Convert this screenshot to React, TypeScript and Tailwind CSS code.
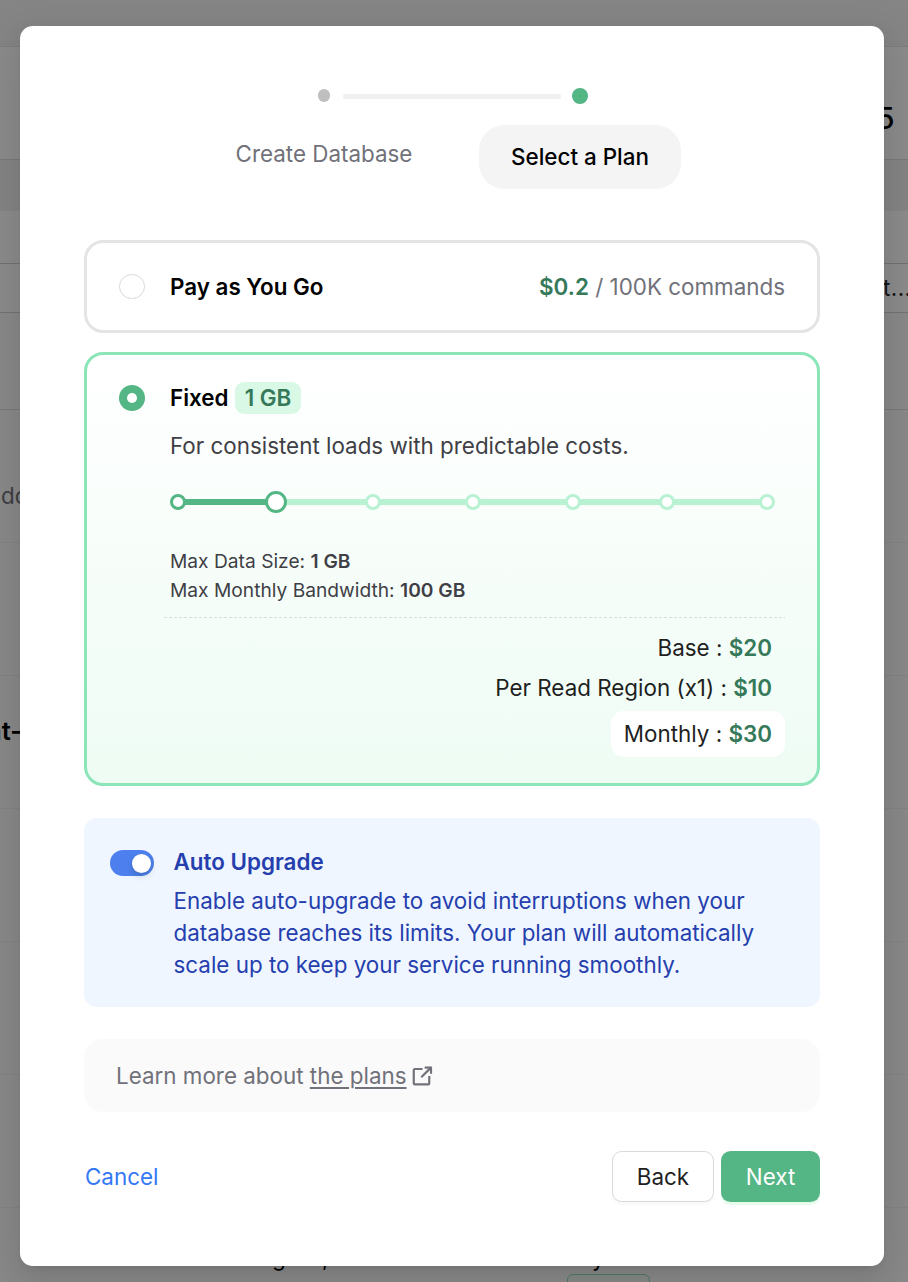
import React from "react";

const rows = [
  "h-[46px] bg-[#f3f3f3]",
  "h-[113px] border-t border-[#e3e3e3] bg-[#fefefe]",
  "h-[52px] border-t border-[#dedede] bg-[#f1f1f1]",
  "h-[52px] bg-[#fefefe]",
  "h-[49px] border-t border-[#cfcfcf] bg-[#fefefe]",
  "h-[97px] border-t border-[#cfcfcf] bg-[#fafafa]",
  "h-[133px] border-t border-[#dddddd] bg-[#fafafa]",
  "h-[133px] border-t border-[#efefef] bg-[#fafafa]",
  "h-[133px] border-t border-[#efefef] bg-[#fafafa]",
  "h-[133px] border-t border-[#efefef] bg-[#fafafa]",
  "h-[133px] border-t border-[#efefef] bg-[#fafafa]",
  "h-[133px] border-t border-[#efefef] bg-[#fafafa]",
  "h-[133px] border-t border-[#efefef] bg-[#fafafa]",
];

function Backdrop() {
  return (
    <div aria-hidden="true">
      {rows.map((c, i) => (
        <div key={i} className={c} />
      ))}
      <span className="absolute left-[876px] top-[98px] text-[30px] font-medium leading-[40px] text-black">5</span>
      <span className="absolute left-[883px] top-[272px] text-[22.4px] leading-8 tracking-[0.02em] text-[#27272a]">t...</span>
      <span className="absolute left-px top-[480px] text-[22.4px] leading-8 text-[#71717a]">do</span>
      <span className="absolute left-[-14px] top-[715px] text-[25.6px] font-semibold leading-8 text-black">nt-</span>
      <span className="absolute left-[272px] top-[1242px] text-[22.4px] leading-8 text-black">g</span>
      <span className="absolute left-[322px] top-[1242px] text-[22.4px] leading-8 text-black">,</span>
      <span className="absolute left-[592px] top-[1242px] text-[22.4px] leading-8 text-black">y</span>
      <span className="absolute left-[567px] top-[1274px] h-8 w-[83px] rounded-[6px] border border-[#8fdcb6] bg-[#f0f9f4]" />
    </div>
  );
}

function Steps() {
  return (
    <div>
      <div className="flex h-4 items-center pl-[234px]">
        <span className="mb-px h-[13px] w-3 rounded-full bg-[#bfbfbf]" />
        <span className="ml-[13px] h-[5px] w-[218px] rounded-[2px] bg-[#f0f0f0]" />
        <span className="ml-[11px] size-4 rounded-full bg-[#54b585]" />
      </div>
      <div className="mt-[21px] flex h-16 pl-28 text-center">
        <div className="w-64 pt-[13px] text-[#71717a]">Create Database</div>
        <div className="ml-[27px] flex w-[202px] items-center justify-center rounded-[25.6px] bg-[#f4f4f4] font-medium text-black">
          Select a Plan
        </div>
      </div>
    </div>
  );
}

type Stop = { width: string; on: boolean; current?: boolean };
const stops: Stop[] = [
  { width: "w-0", on: true },
  { width: "w-[81px] -mx-px", on: true, current: true },
  { width: "w-[80px] -mx-px", on: false },
  { width: "w-[86px] -mx-px", on: false },
  { width: "w-[86px] -mx-px", on: false },
  { width: "w-[80px] -mx-px", on: false },
  { width: "w-[86px] -mx-px", on: false },
];

function SizeSlider() {
  return (
    <div className="mt-[29px] flex h-[22px] items-center" role="slider" aria-valuenow={1} aria-label="Plan size">
      {stops.map((s, i) => (
        <React.Fragment key={i}>
          <span className={`h-1.5 shrink-0 ${s.width} ${s.on ? "bg-[#54b585]" : "bg-[#b9f2d3]"}`} />
          <span
            className={`relative shrink-0 rounded-full border-[3px] bg-white ${s.current ? "size-[22px]" : "size-4"} ${
              s.on ? "border-[#54b585]" : "border-[#b9f2d3]"
            }`}
          />
        </React.Fragment>
      ))}
    </div>
  );
}

export default function App() {
  return (
    <div className="relative h-[1282px] w-[908px] overflow-hidden font-['Inter',sans-serif] text-[22.4px] leading-8 [font-optical-sizing:none]">
      <Backdrop />
      <div className="absolute inset-0 bg-black/45 pl-5 pt-[26px]">
        <div className="h-[1240px] w-[864px] rounded-[12.8px] bg-white px-16 pt-[62px] shadow-[0_10px_26px_0_rgba(0,0,0,0.08),0_5px_10px_-6px_rgba(0,0,0,0.12),0_14px_45px_13px_rgba(0,0,0,0.05)]">
          <Steps />

          <div className="mt-[51px] flex h-[93px] items-center rounded-[19.2px] border-[3px] border-[#e4e4e6] px-8">
            <span className="h-[25px] w-[26px] rounded-full border border-[#d9d9d9]" />
            <span className="ml-[25px] grow font-semibold text-black">Pay as You Go</span>
            <span className="text-[#71717a]">
              <b className="font-semibold text-[#35795a]">$0.2</b> / 100K commands
            </span>
          </div>

          <div className="mt-[19px] flex h-[434px] rounded-[19.2px] border-[3px] border-[#8ce5b9] bg-linear-to-b from-white to-[#eefcf4] pl-8 pr-8 pt-[27px]">
            <span className="mt-[3px] flex size-[26px] shrink-0 items-center justify-center rounded-full bg-[#54b585]">
              <span className="size-2.5 rounded-full bg-white" />
            </span>
            <div className="ml-[25px] grow">
              <div className="flex">
                <span className="w-[59px] font-semibold text-black">Fixed</span>
                <span className="ml-[6px] flex h-8 w-[66px] items-center justify-center rounded-[9px] bg-[#d9f8e6] font-semibold text-[#35795a]">
                  1 GB
                </span>
              </div>
              <div className="mt-4 text-[#3f3f46]">For consistent loads with predictable costs.</div>
              <SizeSlider />
              <div className="mt-[34px] text-[19.2px] leading-[29px] text-[#3f3f46]">
                <div>
                  Max Data Size: <b className="font-semibold">1 GB</b>
                </div>
                <div>
                  Max Monthly Bandwidth: <b className="font-semibold">100 GB</b>
                </div>
              </div>
              <svg className="-ml-1.5 mt-3 block" width="621" height="1" aria-hidden="true">
                <line x1="0" y1="0.5" x2="621" y2="0.5" stroke="#d5e0da" strokeDasharray="3 2" />
              </svg>
              <div className="mt-[14px] flex flex-col items-end text-[#1f1f1f]">
                <div className="pr-[13px]">
                  Base : <b className="font-semibold text-[#35795a]">$20</b>
                </div>
                <div className="mt-2 pr-[13px]">
                  Per Read Region (x1) : <b className="font-semibold text-[#35795a]">$10</b>
                </div>
                <div className="mt-[7px] flex h-[46px] w-[174px] items-center justify-end whitespace-pre rounded-[12.8px] bg-white pr-[13px]">
                  Monthly : <b className="font-semibold text-[#35795a]">$30</b>
                </div>
              </div>
            </div>
          </div>

          <div className="mt-8 flex h-[189px] rounded-[12.8px] bg-[#eff6ff] pl-[26px] pt-7 text-[#263fae]">
            <span className="mt-1 flex h-[26px] w-11 shrink-0 items-center justify-end rounded-full bg-[#4d80ee] pr-[3px]">
              <span className="size-[19px] rounded-full bg-white shadow-[0_3px_6px_0_rgba(0,35,11,0.2)]" />
            </span>
            <div className="ml-[19.5px]">
              <div className="font-semibold">Auto Upgrade</div>
              <div className="mt-[7px]">
                Enable auto-upgrade to avoid interruptions when your
                <br />
                database reaches its limits. Your plan will automatically
                <br />
                scale up to keep your service running smoothly.
              </div>
            </div>
          </div>

          <div className="mt-8 flex h-[73px] items-center rounded-[19.2px] bg-[#fafafa] pl-8 text-[#71717a]">
            <span>
              Learn more about <span className="underline decoration-2 underline-offset-[3px]">the plans</span>
            </span>
            <svg
              className="ml-[2px]"
              width="26"
              height="26"
              viewBox="0 0 24 24"
              fill="none"
              stroke="currentColor"
              strokeWidth="2"
              strokeLinecap="square"
              strokeLinejoin="round"
              aria-hidden="true"
            >
              <path d="M11.5 5.5H5.4a1 1 0 0 0-1 1v12.3a1 1 0 0 0 1 1h12.3a1 1 0 0 0 1-1v-5.8" />
              <path d="M12 12.5l8-8" />
              <path d="M15.5 4.2h4.8v4.8" />
            </svg>
          </div>

          <div className="mt-[39px] flex h-[51px] items-center">
            <button className="grow pl-px text-left text-[#3478f6]">Cancel</button>
            <button className="h-[51px] w-[102px] rounded-[9.6px] border border-[#d9d9d9] bg-white text-[#1f1f1f] shadow-[0_3px_0_0_rgba(0,0,0,0.02)]">
              Back
            </button>
            <button className="ml-[7px] h-[51px] w-[99px] rounded-[9.6px] bg-[#54b585] text-white shadow-[0_3px_0_0_#e6fbec]">
              Next
            </button>
          </div>
        </div>
      </div>
    </div>
  );
}
